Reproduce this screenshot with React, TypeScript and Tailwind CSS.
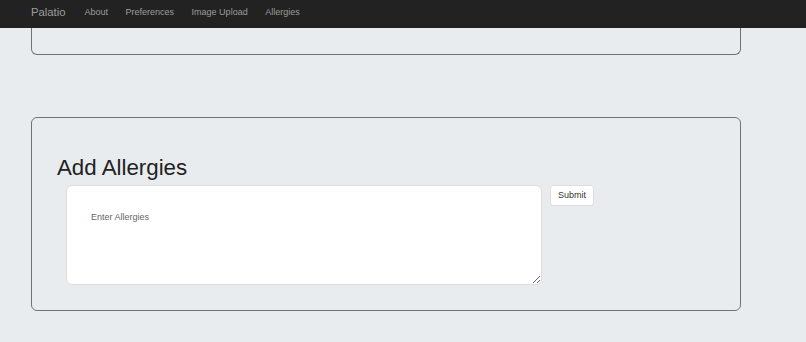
export default function App() {
  const links = ['About', 'Preferences', 'Image Upload', 'Allergies'];

  return (
    <div className="min-h-[342px] bg-[#e9ecef] font-['Liberation_Sans',Arial,sans-serif]">
      <nav className="flex h-[28px] items-center bg-[#222222] pb-[3px] pl-[31px]">
        <span className="mr-[19px] text-[11.3px] text-[#9d9d9d]">Palatio</span>
        <div className="flex gap-[17.5px] text-[9px] text-[#9d9d9d]">
          {links.map((link) => (
            <a key={link} href="#" className="hover:text-white">
              {link}
            </a>
          ))}
        </div>
      </nav>

      <div className="ml-[31px] w-[710px]">
        <div className="h-[27px] rounded-b-[6px] border border-t-0 border-[#6f7378]" />

        <div className="mt-[62px] h-[194px] rounded-[6px] border border-[#6f7378] pl-[25px] pt-[33px]">
          <h2 className="text-[22.3px] leading-[34px] text-[#222222]">Add Allergies</h2>
          <div className="flex items-start pl-[9px]">
            <textarea
              placeholder="Enter Allergies"
              className="h-[100px] w-[476px] rounded-[6px] border border-[#dddddd] bg-white px-[24px] py-[25px] text-[9px] text-[#555555] placeholder:text-[#666666] focus:outline-none"
            />
            <button className="ml-[8px] h-[21px] rounded-[3px] border border-[#dddddd] bg-white px-[7px] text-[9px] text-[#333333]">
              Submit
            </button>
          </div>
        </div>
      </div>
    </div>
  );
}
